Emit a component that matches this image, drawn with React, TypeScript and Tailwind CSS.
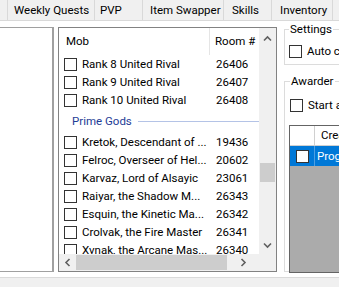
const tabs = [
  { label: "", w: "w-[8px]", pl: "pl-0" },
  { label: "Weekly Quests", w: "w-[87px]", pl: "pl-[6px]" },
  { label: "PVP", w: "w-[48px]", pl: "pl-[5px]" },
  { label: "Item Swapper", w: "w-[81px]", pl: "pl-[7px]" },
  { label: "Skills", w: "w-[48px]", pl: "pl-[8px]" },
  { label: "Inventory", w: "w-[61px]", pl: "pl-[8px]" },
  { label: "", w: "w-[40px]", pl: "pl-0" },
];

const ranks = [
  ["Rank 8 United Rival", "26406"],
  ["Rank 9 United Rival", "26407"],
  ["Rank 10 United Rival", "26408"],
];

const gods = [
  ["Kretok, Descendant of ...", "19436"],
  ["Felroc, Overseer of Hel...", "20602"],
  ["Karvaz, Lord of Alsayic", "23061"],
  ["Raiyar, the Shadow M...", "26343"],
  ["Esquin, the Kinetic Ma...", "26342"],
  ["Crolvak, the Fire Master", "26341"],
  ["Xvnak, the Arcane Mas...", "26340"],
];

function Box() {
  return <div className="w-[13px] h-[13px] shrink-0 border border-[#333] bg-white" />;
}

function Chevron({ dir }: { dir: "up" | "down" | "left" | "right" }) {
  const rot = { up: "rotate-0", down: "rotate-180", left: "-rotate-90", right: "rotate-90" }[dir];
  return (
    <svg width="9" height="9" viewBox="0 0 9 9" className={rot}>
      <path d="M1 6.5 L4.5 3 L8 6.5" fill="none" stroke="#606060" strokeWidth="1.6" />
    </svg>
  );
}

function Row({ name, room }: { name: string; room: string }) {
  return (
    <div className="h-[18px] flex items-center">
      <div className="w-[151px] flex items-center pl-[5px] shrink-0">
        <Box />
        <span className="ml-[5px] whitespace-nowrap">{name}</span>
      </div>
      <span className="pl-[6px]">{room}</span>
    </div>
  );
}

export default function App() {
  return (
    <div className="w-[339px] h-[287px] overflow-hidden bg-white text-[11.5px] leading-[15px] text-black font-['Segoe_UI',Roboto,sans-serif]">
      {/* tab strip */}
      <div className="h-[21px] flex bg-[#f0f0f0] border-b border-[#d9d9d9]">
        {tabs.map((t, i) => (
          <div key={i} className={`${t.w} ${t.pl} shrink-0 h-full flex items-center border-r border-[#d9d9d9] whitespace-nowrap`}>
            {t.label}
          </div>
        ))}
      </div>

      <div className="h-[257px] flex border-b border-[#dadada]">
        {/* left list */}
        <div className="mt-[6px] w-[54px] h-[245px] shrink-0 border-t border-b border-r border-[#a0a0a0] flex justify-end">
          <div className="w-[2px] h-full border-r border-[#a0a0a0]" />
        </div>

        {/* mob list */}
        <div className="mt-[6px] ml-[4px] w-[219px] h-[245px] shrink-0 border border-[#828282] grid grid-cols-[200px_17px] grid-rows-[226px_17px]">
          <div className="overflow-hidden">
            <div className="h-[27px] flex">
              <div className="w-[151px] pl-[7px] flex items-center border-r border-[#e5e5e5]">Mob</div>
              <div className="pl-[5px] flex items-center">Room #</div>
            </div>
            {ranks.map(([n, r]) => (
              <Row key={n} name={n} room={r} />
            ))}
            <div className="h-[24px] flex items-center pl-[13px]">
              <span className="text-[#1e3c96]">Prime Gods</span>
              <div className="flex-1 ml-[6px] h-px bg-[#b4c3e6]" />
            </div>
            {gods.map(([n, r]) => (
              <Row key={n} name={n} room={r} />
            ))}
          </div>
          <div className="bg-[#f0f0f0] flex flex-col items-center">
            <div className="h-[17px] mt-[2px] flex items-center justify-center"><Chevron dir="up" /></div>
            <div className="mt-[116px] w-[15px] h-[19px] bg-[#cdcdcd]" />
            <div className="flex-1" />
            <div className="h-[17px] flex items-center justify-center"><Chevron dir="down" /></div>
          </div>
          <div className="bg-[#f0f0f0] flex items-center">
            <div className="w-[17px] flex justify-center"><Chevron dir="left" /></div>
            <div className="w-[151px] h-[15px] bg-[#cdcdcd]" />
            <div className="flex-1 flex justify-center"><Chevron dir="right" /></div>
          </div>
          <div className="bg-[#f0f0f0]" />
        </div>

        {/* right column */}
        <div className="ml-[7px] w-[80px] shrink-0 flex flex-col">
          <fieldset className="mt-[1px] border border-[#dcdcdc] h-[43px]">
            <legend className="ml-[4px] px-px">Settings</legend>
            <div className="mt-[7px] pl-[4px] flex items-center">
              <Box />
              <span className="ml-[5px] whitespace-nowrap">Auto collect</span>
            </div>
          </fieldset>
          <fieldset className="mt-[9px] border border-[#dcdcdc] h-[198px]">
            <legend className="ml-[5px] px-px">Awarder</legend>
            <div className="mt-[9px] pl-[5px] flex items-center">
              <Box />
              <span className="ml-[5px] whitespace-nowrap">Start awarding</span>
            </div>
            <div className="mt-[12px] ml-[4px] h-[148px] border border-[#646464] bg-[#ababab]">
              <div className="h-[20px] bg-white flex border-b border-[#d0d0d0]">
                <div className="w-[25px] border-r border-[#d0d0d0]" />
                <div className="pl-[6px] flex items-center whitespace-nowrap">Created</div>
              </div>
              <div className="h-[20px] bg-[#0078d7] flex text-white">
                <div className="w-[25px] border-r border-[#4d9fe2] flex items-center justify-center">
                  <Box />
                </div>
                <div className="pl-[2px] flex items-center whitespace-nowrap">Progress</div>
              </div>
            </div>
          </fieldset>
        </div>
      </div>
      <div className="h-[9px] bg-[#f0f0f0]" />
    </div>
  );
}
